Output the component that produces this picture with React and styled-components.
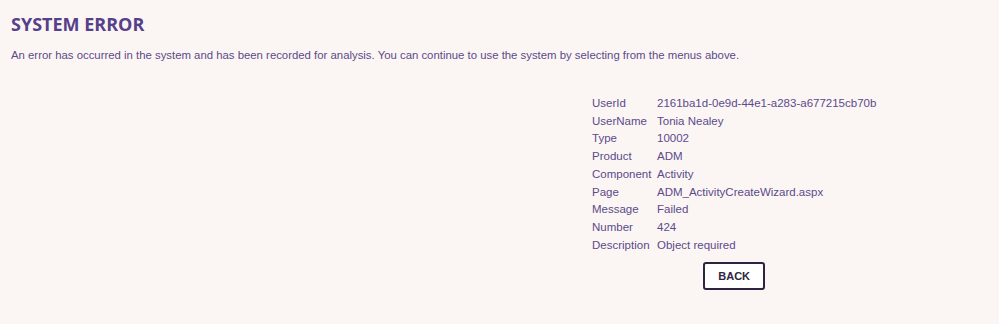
import React from 'react';
import styled, { createGlobalStyle } from 'styled-components';

const GlobalStyle = createGlobalStyle`
  html, body {
    margin: 0;
    padding: 0;
    background: #fbf6f3;
  }
  body {
    font-family: "Liberation Sans", Arial, sans-serif;
    color: #5b4a8c;
  }
`;

const Page = styled.div`
  padding: 12px 11px 20px 11px;
  min-height: 324px;
  box-sizing: border-box;
`;

const Title = styled.h1`
  margin: 0;
  font-family: "Open Sans", sans-serif;
  font-weight: 700;
  font-size: 18px;
  line-height: 24px;
  color: #56408a;
`;

const Intro = styled.p`
  margin: 11px 0 0 0;
  font-size: 11.37px;
  line-height: 16px;
`;

const Details = styled.div`
  display: flex;
  flex-direction: column;
  align-items: center;
  width: max-content;
  margin: 31px 0 0 581px;
`;

const InfoGrid = styled.div`
  display: grid;
  grid-template-columns: 65px auto;
  grid-auto-rows: 17.75px;
  align-items: center;
  font-size: 11.5px;
  line-height: 14px;
`;

const Label = styled.span`
  white-space: nowrap;
`;
const Value = styled.span`
  white-space: nowrap;
`;

const BackButton = styled.button`
  margin-top: 8px;
  width: 62px;
  height: 28px;
  background: #fff;
  border: 2px solid #2e2440;
  border-radius: 3px;
  color: #2e2440;
  font-family: "Liberation Sans", Arial, sans-serif;
  font-weight: 700;
  font-size: 11px;
  cursor: pointer;
`;

const rows = [
  ['UserId', '2161ba1d-0e9d-44e1-a283-a677215cb70b'],
  ['UserName', 'Tonia Nealey'],
  ['Type', '10002'],
  ['Product', 'ADM'],
  ['Component', 'Activity'],
  ['Page', 'ADM_ActivityCreateWizard.aspx'],
  ['Message', 'Failed'],
  ['Number', '424'],
  ['Description', 'Object required'],
];

function App() {
  return (
    <Page>
      <GlobalStyle />
      <Title>SYSTEM ERROR</Title>
      <Intro>
        An error has occurred in the system and has been recorded for analysis. You can continue to use the system by selecting from the menus above.
      </Intro>
      <Details>
        <InfoGrid>
          {rows.map(([label, value]) => (
            <React.Fragment key={label}>
              <Label>{label}</Label>
              <Value>{value}</Value>
            </React.Fragment>
          ))}
        </InfoGrid>
        <BackButton type="button">BACK</BackButton>
      </Details>
    </Page>
  );
}

export default App;
